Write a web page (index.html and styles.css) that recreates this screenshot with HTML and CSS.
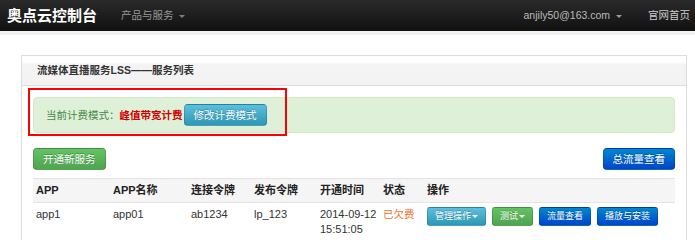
FILE: index.html
```html
<!DOCTYPE html>
<html lang="zh-CN">
<head>
  <meta charset="UTF-8">
  <title>奥点云控制台</title>
  <link rel="stylesheet" href="styles.css">
</head>
<body>
  <!-- Navbar -->
  <div class="navbar">
    <div class="brand">奥点云控制台</div>
    <ul class="nav">
      <li><a href="#">产品与服务 <span class="caret"></span></a></li>
    </ul>
    <ul class="nav nav-right">
      <li><a href="#">anjily50@163.com <span class="caret"></span></a></li>
      <li><a href="#" class="home-link">官网首页</a></li>
    </ul>
  </div>
  <div class="subbar"></div>

  <!-- Panel -->
  <div class="panel">
    <div class="panel-heading">流媒体直播服务LSS——服务列表</div>
    <div class="panel-body">
      <div class="alert-wrap">
        <div class="alert">
          <span>当前计费模式：</span><span class="mode">峰值带宽计费</span>
          <a class="btn btn-info" href="#">修改计费模式</a>
        </div>
        <div class="highlight"></div>
      </div>

      <div class="toolbar">
        <a class="btn btn-success" href="#">开通新服务</a>
        <a class="btn btn-primary" href="#">总流量查看</a>
      </div>

      <table class="service-table">
        <thead>
          <tr>
            <th class="c1">APP</th>
            <th class="c2">APP名称</th>
            <th class="c3">连接令牌</th>
            <th class="c4">发布令牌</th>
            <th class="c5">开通时间</th>
            <th class="c6">状态</th>
            <th>操作</th>
          </tr>
        </thead>
        <tbody>
          <tr>
            <td>app1</td>
            <td>app01</td>
            <td>ab1234</td>
            <td>lp_123</td>
            <td>2014-09-12<br>15:51:05</td>
            <td class="owed">已欠费</td>
            <td>
              <div class="actions">
                <a class="btn btn-mini btn-info" href="#">管理操作<span class="caret"></span></a>
                <a class="btn btn-mini btn-success" href="#">测试<span class="caret"></span></a>
                <a class="btn btn-mini btn-primary" href="#">流量查看</a>
                <a class="btn btn-mini btn-primary" href="#">播放与安装</a>
              </div>
            </td>
          </tr>
        </tbody>
      </table>
    </div>
  </div>
</body>
</html>
```

FILE: styles.css
```css
body {
  margin: 0;
  font-family: "Liberation Sans", "Noto Sans CJK SC", sans-serif;
  font-size: 11px;
  line-height: 15px;
  color: #333;
  background-color: #fff;
}

a {
  text-decoration: none;
}

/* Navbar */
.navbar {
  display: flex;
  align-items: center;
  height: 31px;
  padding: 0 5px 0 7px;
  background: linear-gradient(#2a2a2a, #111);
}

.brand {
  font-size: 15px;
  font-weight: bold;
  color: #fff;
  margin-right: 24px;
}

.nav {
  list-style: none;
  display: flex;
  gap: 26px;
  margin: 0;
  padding: 0;
  font-size: 10.5px;
}

.nav a {
  color: #999;
}

.nav-right {
  margin-left: auto;
}

.nav-right a {
  color: #bbb;
}

.nav .home-link {
  color: #ccc;
}

.caret {
  display: inline-block;
  width: 0;
  height: 0;
  margin-left: 3px;
  vertical-align: middle;
  border-top: 3px solid currentColor;
  border-left: 3px solid transparent;
  border-right: 3px solid transparent;
  opacity: 0.8;
}

.subbar {
  height: 4px;
  background-color: #f2f2f2;
}

/* Panel */
.panel {
  margin: 20px 8px 0 21px;
  border: 1px solid #ddd;
  border-bottom: none;
  min-height: 200px;
}

.panel-heading {
  height: 29px;
  line-height: 29px;
  padding-left: 15px;
  font-size: 10.5px;
  font-weight: bold;
  color: #333;
  background: linear-gradient(#fff 20%, #f3f3f3 30%, #f3f3f3);
  border-bottom: 1px solid #ddd;
}

.panel-body {
  padding: 11px 11px 0 11px;
}

.alert-wrap {
  position: relative;
}

.alert {
  display: flex;
  align-items: center;
  height: 22px;
  padding: 6px 12px;
  background-color: #dff0d8;
  border: 1px solid #d6e9c6;
  border-radius: 4px;
  color: #468847;
  font-size: 10.5px;
}

.mode {
  color: #d20000;
  font-weight: bold;
  margin-right: 1px;
}

/* red annotation box drawn over the alert */
.highlight {
  position: absolute;
  left: -5px;
  top: -9px;
  width: 255px;
  height: 44px;
  border: 2px solid #f00;
}

.toolbar {
  display: flex;
  justify-content: space-between;
  margin: 15px 0 8px;
}

/* Buttons */
.btn {
  display: inline-block;
  height: 22px;
  line-height: 20px;
  padding: 0 9px;
  border-radius: 4px;
  font-size: 10.5px;
  color: #fff;
  text-shadow: 0 -1px 0 rgba(0, 0, 0, 0.25);
  box-sizing: border-box;
  border: 1px solid rgba(0, 0, 0, 0.15);
}

.btn-info {
  background: linear-gradient(#5bc0de, #2f96b4);
}

.btn-success {
  background: linear-gradient(#62c462, #51a351);
}

.btn-primary {
  background: linear-gradient(#0088cc, #0044cc);
}

.btn-mini {
  height: 19px;
  line-height: 17px;
  padding: 0 7px;
  font-size: 9px;
  border-radius: 3px;
}

.btn-mini .caret {
  margin-left: 1px;
  border-top-color: #fff;
  opacity: 1;
}

/* Table */
.service-table {
  width: 100%;
  border-collapse: collapse;
  table-layout: fixed;
}

.service-table th,
.service-table td {
  box-sizing: border-box;
  text-align: left;
  vertical-align: top;
  padding: 4px 3px;
  border-top: 1px solid #e4e4e4;
}

.service-table th {
  font-weight: bold;
  color: #222;
  background-color: #f5f5f5;
  border-bottom: 1px solid #e4e4e4;
}

.service-table tbody tr {
  border-bottom: 1px solid #ddd;
}

.service-table td {
  padding-bottom: 3px;
}

.c1 { width: 77px; }
.c2 { width: 78px; }
.c3 { width: 63px; }
.c4 { width: 66px; }
.c5 { width: 63px; }
.c6 { width: 44px; }

.owed {
  color: #f3702a;
  font-size: 10.5px;
}

.actions {
  display: flex;
  gap: 6px;
}
```
